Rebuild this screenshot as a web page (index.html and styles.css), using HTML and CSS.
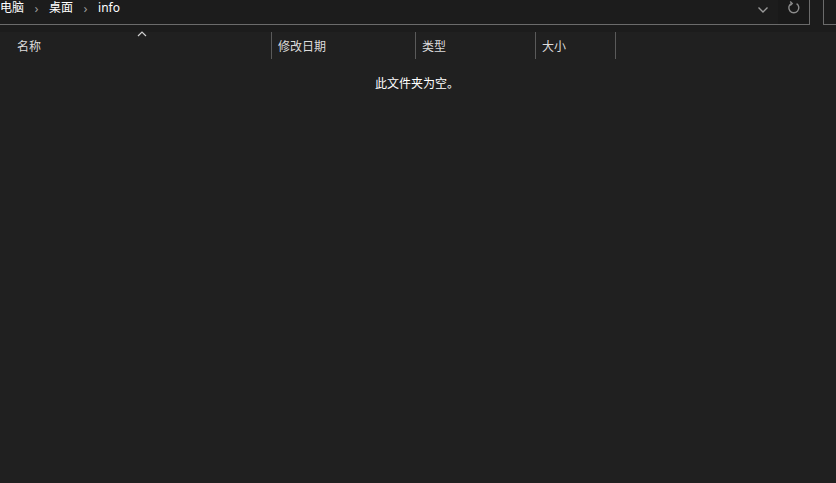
FILE: index.html
```html
<!DOCTYPE html>
<html lang="zh-CN">
    <head>
        <meta charset="UTF-8">
        <title>info</title>
        <link rel="stylesheet" href="styles.css">
    </head>
    <body>
        <div class="toolbar">
            <div class="address">
                <div class="crumbs">
                    <span class="crumb">电脑</span>
                    <span class="sep">›</span>
                    <span class="crumb">桌面</span>
                    <span class="sep">›</span>
                    <span class="crumb">info</span>
                </div>
                <div class="dropdown">
                    <svg width="12" height="8" viewBox="0 0 12 8"><path d="M1.5 1.5 L6 6 L10.5 1.5" fill="none" stroke="#9a9a9a" stroke-width="1.4"/></svg>
                </div>
                <div class="refresh">
                    <svg width="14" height="14" viewBox="0 0 14 14"><path d="M9.6 2.6 A5 5 0 1 1 4.2 2.5" fill="none" stroke="#8c8c8c" stroke-width="1.4"/><path d="M3.2 0.6 L5.2 2.6 L3.2 4.6" fill="none" stroke="#8c8c8c" stroke-width="1.4"/></svg>
                </div>
            </div>
            <div class="search"></div>
        </div>

        <div class="columns">
            <div class="col col-name">
                名称
                <svg class="sort" width="10" height="6" viewBox="0 0 10 6"><path d="M1 5 L5 1 L9 5" fill="none" stroke="#cfcfcf" stroke-width="1.2"/></svg>
            </div>
            <div class="col col-date">修改日期</div>
            <div class="col col-type">类型</div>
            <div class="col col-size">大小</div>
        </div>

        <p class="empty">此文件夹为空。</p>
    </body>
</html>
```

FILE: styles.css
```css
*{
    margin: 0;
    padding: 0;
    box-sizing: border-box;
}

body{
    background-color: #202020;
    color: #ffffff;
    font-family: "Segoe UI", "Noto Sans", "Noto Sans CJK SC", sans-serif;
    height: 100vh;
    overflow: hidden;
}

.toolbar{
    display: flex;
    gap: 13px;
    height: 40px;
    margin-top: -8px;
    background-color: #1c1c1c;
}

.address{
    display: flex;
    align-items: center;
    width: 810px;
    height: 33px;
    border-right: 1px solid #6b6b6b;
    border-bottom: 1px solid #6b6b6b;
}

.crumbs{
    flex: 1;
    display: flex;
    align-items: center;
    font-size: 12px;
    line-height: 16px;
}

.crumb{
    color: #ffffff;
}

.sep{
    color: #9a9a9a;
    font-size: 13px;
    width: 25px;
    text-align: center;
}

.dropdown{
    width: 31px;
    height: 100%;
    display: flex;
    align-items: center;
    justify-content: center;
    padding-top: 3px;
}

.refresh{
    width: 31px;
    height: 100%;
    display: flex;
    align-items: center;
    justify-content: center;
    background-color: #191919;
}

.search{
    flex: 1;
    height: 33px;
    border-left: 1px solid #6b6b6b;
    border-bottom: 1px solid #6b6b6b;
}

.columns{
    display: flex;
    height: 27px;
}

.col{
    position: relative;
    display: flex;
    align-items: center;
    padding-left: 6px;
    border-right: 1px solid #5a5a5a;
    font-size: 12px;
    color: #dcdcdc;
}

.col-name{
    width: 272px;
    padding-left: 17px;
}

.col-date{
    width: 144px;
}

.col-type{
    width: 120px;
}

.col-size{
    width: 80px;
}

.sort{
    position: absolute;
    left: 137px;
    top: -1px;
}

.empty{
    text-align: center;
    font-size: 12px;
    color: #ffffff;
    margin-top: 15px;
    padding-right: 2px;
}
```
